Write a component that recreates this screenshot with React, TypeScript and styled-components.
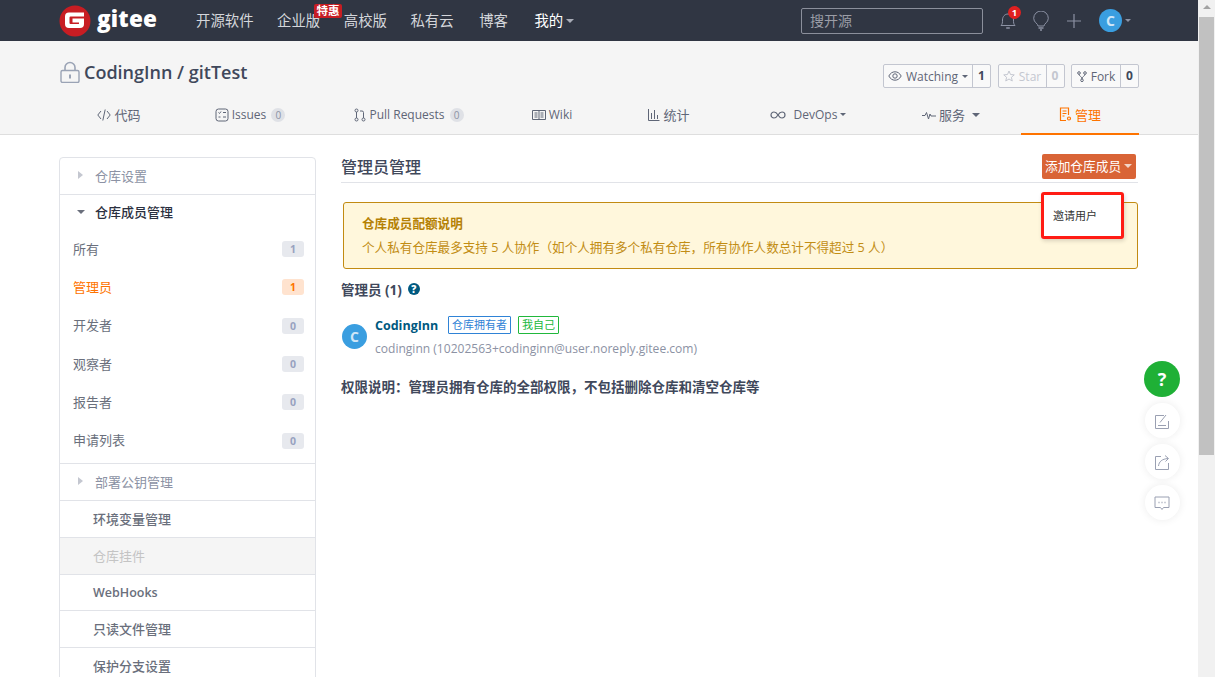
import React from 'react';
import styled, { createGlobalStyle } from 'styled-components';

const GlobalStyle = createGlobalStyle`
  html, body {
    margin: 0;
    height: 677px;
    overflow: hidden;
    background: #fff;
    font-family: "Open Sans", "Noto Sans CJK SC", sans-serif;
    color: #40485b;
  }
  * { box-sizing: border-box; }
`;

const Caret: React.FC<{ size?: number; color?: string; gap?: number }> = ({ size = 4, color = '#8c92a4', gap = 0 }) => (
  <CaretShape $size={size} $color={color} $gap={gap} />
);

const navItems = ['开源软件', '企业版', '高校版', '私有云', '博客'];

const tabs = [
  { label: '代码', width: 118, icon: 'code', cjk: true },
  { label: 'Issues', width: 144, icon: 'issues', count: 0 },
  { label: 'Pull Requests', width: 174, icon: 'pr', count: 0 },
  { label: 'Wiki', width: 112, icon: 'wiki' },
  { label: '统计', width: 122, icon: 'chart', cjk: true },
  { label: 'DevOps', width: 156, icon: 'devops', caret: true },
  { label: '服务', width: 130, icon: 'pulse', caret: true, cjk: true },
];

const members = [
  { label: '所有', count: 1 },
  { label: '管理员', count: 1, active: true },
  { label: '开发者', count: 0 },
  { label: '观察者', count: 0 },
  { label: '报告者', count: 0 },
  { label: '申请列表', count: 0 },
];

const TabIcon: React.FC<{ name: string; color?: string }> = ({ name, color = '#5f6677' }) => {
  const common = { fill: 'none', stroke: color, strokeWidth: 1 };
  switch (name) {
    case 'code':
      return (
        <svg width="14" height="14" viewBox="0 0 14 14" {...common}>
          <path d="M4 3L.8 7 4 11M10 3l3.200 4L10 11M8.200 1.500L5.800 12.500" />
        </svg>
      );
    case 'issues':
      return (
        <svg width="14" height="14" viewBox="0 0 14 14" {...common}>
          <rect x="1" y="1" width="12" height="12" rx="2.500" />
          <path d="M3.500 4.500l1 1 1.500-2M8 4.500h3M3.500 9h2M8 9h3" />
        </svg>
      );
    case 'pr':
      return (
        <svg width="12" height="14" viewBox="0 0 12 14" {...common}>
          <circle cx="2.500" cy="2.500" r="1.500" />
          <circle cx="2.500" cy="11.500" r="1.500" />
          <circle cx="9.500" cy="11.500" r="1.500" />
          <path d="M2.500 4v6M9.500 10V4.500q0-1.500-1.500-1.500H6" />
        </svg>
      );
    case 'wiki':
      return (
        <svg width="14" height="12" viewBox="0 0 14 12" {...common}>
          <path d="M.5 1.500h13v9H.5zM7 1.500v9M2.500 4h3M2.500 6h3M2.500 8h3M8.500 4h3M8.500 6h3M8.500 8h3" />
        </svg>
      );
    case 'chart':
      return (
        <svg width="12" height="13" viewBox="0 0 12 13" {...common}>
          <path d="M.5 1v11.500h11M3.500 5v6M6.500 2v9M9.500 7v4" />
        </svg>
      );
    case 'devops':
      return (
        <svg width="16" height="8" viewBox="0 0 16 8" {...common} strokeWidth="1.200" style={{ marginRight: 5 }}>
          <path d="M8 4C6.500 1.500 5.500 1 4 1a3 3 0 000 6c1.500 0 2.500-.5 4-3 1.500-2.500 2.500-3 4-3a3 3 0 010 6c-1.500 0-2.500-.5-4-3z" />
        </svg>
      );
    case 'pulse':
      return (
        <svg width="14" height="10" viewBox="0 0 14 10" {...common}>
          <path d="M0 5.500h3l1.500-3 2 6.500 1.500-5 1 2h5" />
        </svg>
      );
    default:
      return (
        <svg width="13" height="15" viewBox="0 0 13 15" fill="none" stroke={color} strokeWidth="1.200">
          <path d="M7 13.500H1.500V1h8v7M3.500 4h4M3.500 6.500h4M3.500 9h2" />
          <circle cx="10" cy="11.500" r="1.500" />
        </svg>
      );
  }
};

const App: React.FC = () => (
  <>
    <GlobalStyle />
    <Viewport>
      <Page>
        <Header>
          <Logo>
            <svg width="32" height="32" viewBox="0 0 32 32">
              <circle cx="16" cy="16" r="15.500" fill="#c71d23" />
              <path
                d="M10 7.500h15v4H11.500a1 1 0 00-1 1V18a1 1 0 001 1h8a.5.5 0 00.5-.5v-1h-6.500v-4H25V19a4 4 0 01-4 4H10a4 4 0 01-4-4v-7.500a4 4 0 014-4z"
                fill="#fff"
              />
            </svg>
            <LogoText>gitee</LogoText>
          </Logo>
          <Nav>
            {navItems.map((item) => (
              <NavLink key={item}>
                {item}
                {item === '企业版' && <PromoBadge>特惠</PromoBadge>}
              </NavLink>
            ))}
            <NavLink $bright>
              我的
              <Caret size={4} color="#a9adb8" />
            </NavLink>
          </Nav>
          <HeaderTools>
            <SearchBox>搜开源</SearchBox>
            <Bell>
              <svg width="16" height="19" viewBox="0 0 16 19" fill="none" stroke="#8c92a4" strokeWidth="1">
                <path d="M1 14.500c1.500-1.500 1.500-3 1.500-5.500 0-3.500 2.300-6 5.500-6s5.500 2.500 5.500 6c0 2.500 0 4 1.500 5.500z" />
                <path d="M6.200 17h3.600" strokeWidth="1.500" />
              </svg>
              <BellBadge>1</BellBadge>
            </Bell>
            <svg width="16" height="20" viewBox="0 0 16 20" fill="none" stroke="#8c92a4" strokeWidth="1">
              <path d="M5 15c0-2.500-4.300-3.500-4.300-7.700a7.300 7.300 0 0114.600 0C15.300 11.500 11 12.500 11 15z" />
              <path d="M5.500 17h5M7 19h2" strokeWidth="1.300" />
            </svg>
            <svg width="16" height="16" viewBox="0 0 16 16" stroke="#8c92a4" strokeWidth="1.200">
              <path d="M8 1v14M1 8h14" />
            </svg>
            <UserMenu>
              <Avatar $size={23}>C</Avatar>
              <Caret size={3} color="#8c92a4" />
            </UserMenu>
          </HeaderTools>
        </Header>

        <RepoBar>
          <RepoTop>
            <RepoTitle>
              <svg width="20" height="22" viewBox="0 0 20 22" fill="none">
                <path d="M5 10V6.500a5 5 0 0110 0V10" stroke="#9aa3b5" strokeWidth="1.600" />
                <rect x="1" y="9.500" width="18" height="12" rx="1.500" fill="#f5f5f5" stroke="#9aa3b5" strokeWidth="1.400" />
                <rect x="9" y="13.500" width="2" height="4" fill="#9aa3b5" />
              </svg>
              CodingInn / gitTest
            </RepoTitle>
            <RepoActions>
              <ActionGroup>
                <ActionLabel $w={89}>
                  <svg width="14" height="10" viewBox="0 0 14 10" fill="none" stroke="#5f6677">
                    <path d="M.8 5C2.500 2 4.500.8 7 .8S11.500 2 13.200 5C11.500 8 9.500 9.200 7 9.200S2.500 8 .8 5z" />
                    <circle cx="7" cy="5" r="2.200" />
                  </svg>
                  Watching
                  <Caret size={3} color="#5f6677" />
                </ActionLabel>
                <ActionCount $w={17}>1</ActionCount>
              </ActionGroup>
              <ActionGroup>
                <ActionLabel $w={48} $muted>
                  <svg width="12" height="12" viewBox="0 0 24 24" fill="none" stroke="#c4c7d0" strokeWidth="2">
                    <path d="M12 2l3 7 7.500.7-5.700 5 1.700 7.300L12 18l-6.500 4 1.700-7.300-5.700-5L9 9z" />
                  </svg>
                  Star
                </ActionLabel>
                <ActionCount $w={17} $muted>0</ActionCount>
              </ActionGroup>
              <ActionGroup>
                <ActionLabel $w={49}>
                  <svg width="10" height="11" viewBox="0 0 10 11" fill="none" stroke="#5f6677">
                    <circle cx="2" cy="2" r="1.300" />
                    <circle cx="8" cy="2" r="1.300" />
                    <circle cx="5" cy="9.300" r="1.300" />
                    <path d="M2 3.300c0 2 3 2 3 4.600M8 3.300c0 2-3 2-3 4.600" />
                  </svg>
                  Fork
                </ActionLabel>
                <ActionCount $w={17}>0</ActionCount>
              </ActionGroup>
            </RepoActions>
          </RepoTop>
          <Tabs>
            {tabs.map((tab) => (
              <Tab key={tab.label} $w={tab.width} $cjk={tab.cjk}>
                <TabIcon name={tab.icon} />
                <span>{tab.label}</span>
                {tab.count !== undefined && <TabCount>{tab.count}</TabCount>}
                {tab.caret &&
                  (tab.label === '服务' ? <Caret size={4} color="#5f6677" gap={4} /> : <Caret size={3} color="#5f6677" />)}
              </Tab>
            ))}
            <ActiveTab>
              <TabIcon name="manage" color="#fe7300" />
              管理
            </ActiveTab>
          </Tabs>
        </RepoBar>

        <Body>
          <Sidebar>
            <SideHead>
              <SideArrow />
              仓库设置
            </SideHead>
            <MemberGroup>
              <GroupHead>
                <Caret size={4} color="#6a6f7c" />
                仓库成员管理
              </GroupHead>
              {members.map((m) => (
                <MemberRow key={m.label} $active={m.active}>
                  <MemberLabel>{m.label}</MemberLabel>
                  <CountPill $active={m.active}>{m.count}</CountPill>
                </MemberRow>
              ))}
            </MemberGroup>
            <SideHead>
              <SideArrow />
              部署公钥管理
            </SideHead>
            <SideLink>环境变量管理</SideLink>
            <SideLink $disabled>仓库挂件</SideLink>
            <SideLink $latin>WebHooks</SideLink>
            <SideLink>只读文件管理</SideLink>
            <SideLink>保护分支设置</SideLink>
          </Sidebar>

          <Content>
            <TitleRow>
              <PageTitle>管理员管理</PageTitle>
              <AddWrap>
                <AddButton>
                  添加仓库成员
                  <Caret size={4} color="#f3d5c8" />
                </AddButton>
                <Dropdown>邀请用户</Dropdown>
              </AddWrap>
            </TitleRow>

            <Notice>
              <NoticeTitle>仓库成员配额说明</NoticeTitle>
              <NoticeText>个人私有仓库最多支持 5 人协作（如个人拥有多个私有仓库，所有协作人数总计不得超过 5 人）</NoticeText>
            </Notice>

            <SectionLabel>
              管理员 (1)
              <HelpDot>?</HelpDot>
            </SectionLabel>

            <MemberCard>
              <Avatar $size={25}>C</Avatar>
              <MemberInfo>
                <NameLine>
                  <MemberName>CodingInn</MemberName>
                  <Tag $color="#2f83d6">仓库拥有者</Tag>
                  <Tag $color="#21b83c">我自己</Tag>
                </NameLine>
                <MemberMail>codinginn (10202563+codinginn@user.noreply.gitee.com)</MemberMail>
              </MemberInfo>
            </MemberCard>

            <RightsNote>权限说明：管理员拥有仓库的全部权限，不包括删除仓库和清空仓库等</RightsNote>
          </Content>
        </Body>
      </Page>

      <Scrollbar>
        <ScrollUp />
        <ScrollThumb />
      </Scrollbar>

      <FloatBar>
        <FloatHelp>?</FloatHelp>
        <FloatButton>
          <svg width="16" height="16" viewBox="0 0 16 16" fill="none" stroke="#9aa0b2">
            <path d="M14.500 8v7.500h-13v-13H10M4 12.500h8M6 9.500l6-7.500" />
          </svg>
        </FloatButton>
        <FloatButton>
          <svg width="16" height="16" viewBox="0 0 16 16" fill="none" stroke="#9aa0b2">
            <path d="M14.500 9v6.500h-13v-13H7M4.500 12C5 7.500 8 5 14 4.500M11 1.500l3.500 3-3 3" />
          </svg>
        </FloatButton>
        <FloatButton>
          <svg width="16" height="16" viewBox="0 0 16 16" fill="none" stroke="#9aa0b2">
            <path d="M1 2h14v10.500H9.500L8 14.500l-1.500-2H1z" />
            <path d="M4.500 7.500h1M7.500 7.500h1M10.500 7.500h1" strokeWidth="1.500" />
          </svg>
        </FloatButton>
      </FloatBar>
    </Viewport>
  </>
);

const Viewport = styled.div`
  display: flex;
  width: 1215px;
  height: 677px;
  overflow: hidden;
`;

const Page = styled.div`
  flex: 0 0 1198px;
  height: 677px;
  overflow: hidden;
  font-size: 13px;
`;

const CaretShape = styled.span<{ $size: number; $color: string; $gap: number }>`
  display: inline-block;
  width: 0;
  height: 0;
  margin-left: ${(p) => p.$gap}px;
  border-left: ${(p) => p.$size}px solid transparent;
  border-right: ${(p) => p.$size}px solid transparent;
  border-top: ${(p) => p.$size}px solid ${(p) => p.$color};
`;

const Header = styled.header`
  display: flex;
  align-items: center;
  height: 41px;
  padding: 0 67px 0 59px;
  background: #303643;
`;

const Logo = styled.div`
  display: flex;
  flex: none;
  align-items: center;
  gap: 6px;
  width: 137px;
`;

const LogoText = styled.span`
  font-family: "Open Sans", sans-serif;
  font-weight: 800;
  font-size: 22.500px;
  letter-spacing: 0.2px;
  color: #fff;
  line-height: 32px;
  margin-top: -3px;
`;

const Nav = styled.nav`
  display: flex;
  flex: none;
  align-items: center;
  gap: 23.500px;
  white-space: nowrap;

  a:nth-child(5) {
    margin-left: 2px;
  }
`;

const NavLink = styled.a<{ $bright?: boolean }>`
  position: relative;
  display: flex;
  flex: none;
  align-items: center;
  gap: 3px;
  font-size: 14.400px;
  line-height: 20px;
  color: ${(p) => (p.$bright ? '#fff' : '#d4d6db')};
  margin-left: ${(p) => (p.$bright ? '3px' : '0')};
`;

const PromoBadge = styled.span`
  position: absolute;
  left: 37px;
  top: -7px;
  width: 28px;
  height: 14px;
  background: #c71d23;
  border-radius: 2px;
  color: #fff;
  font-size: 11.500px;
  font-weight: 700;
  line-height: 14px;
  text-align: center;
`;

const HeaderTools = styled.div`
  display: flex;
  flex: none;
  align-items: center;
  margin-left: auto;
  gap: 17px;
`;

const SearchBox = styled.div`
  width: 182px;
  height: 26px;
  padding-left: 8px;
  border: 1px solid #8b8f9b;
  border-radius: 2px;
  color: #9a9da6;
  font-size: 14px;
  line-height: 24px;
`;

const Bell = styled.div`
  position: relative;
  display: flex;
`;

const BellBadge = styled.span`
  position: absolute;
  left: 8px;
  top: -5px;
  width: 13px;
  height: 13px;
  border-radius: 50%;
  background: #e02020;
  color: #fff;
  font-size: 9.500px;
  font-weight: 700;
  line-height: 13px;
  text-align: center;
`;

const UserMenu = styled.div`
  display: flex;
  align-items: center;
  gap: 3px;
`;

const Avatar = styled.span<{ $size: number }>`
  display: flex;
  align-items: center;
  justify-content: center;
  flex: none;
  width: ${(p) => p.$size}px;
  height: ${(p) => p.$size}px;
  border-radius: 50%;
  background: #3a9ee0;
  color: #cfe6f7;
  font-size: 14px;
  font-weight: 700;
`;

const RepoBar = styled.section`
  height: 94px;
  padding: 0 59px 0 60px;
  background: #f5f5f5;
  border-bottom: 1px solid #dedede;
`;

const RepoTop = styled.div`
  display: flex;
  justify-content: space-between;
  height: 57px;
  padding-top: 21px;
`;

const RepoTitle = styled.h1`
  display: flex;
  align-items: center;
  gap: 4px;
  height: 22px;
  margin: -1px 0 0;
  font-size: 18px;
  font-weight: 600;
  color: #40485b;
`;

const RepoActions = styled.div`
  display: flex;
  gap: 6.500px;
  margin-top: 2px;
`;

const ActionGroup = styled.div`
  display: flex;
  height: 24px;
  background: #f9f9f9;
  border: 1px solid #c3c6d0;
  border-radius: 2px;
  font-size: 12px;
`;

const ActionLabel = styled.span<{ $w: number; $muted?: boolean }>`
  display: flex;
  align-items: center;
  justify-content: center;
  gap: 4px;
  width: ${(p) => p.$w}px;
  color: ${(p) => (p.$muted ? '#c4c7d0' : '#5f6677')};
  border-right: 1px solid #c3c6d0;
`;

const ActionCount = styled.span<{ $w: number; $muted?: boolean }>`
  width: ${(p) => p.$w}px;
  text-align: center;
  line-height: 22px;
  font-weight: 700;
  color: ${(p) => (p.$muted ? '#c4c7d0' : '#40485b')};
`;

const Tabs = styled.nav`
  display: flex;
  height: 36px;
`;

const Tab = styled.a<{ $w: number; $cjk?: boolean }>`
  display: flex;
  align-items: center;
  justify-content: center;
  gap: 3px;
  width: ${(p) => p.$w}px;
  height: 35px;
  padding-bottom: 2px;
  color: #5f6677;
  font-size: ${(p) => (p.$cjk ? '13px' : '12px')};
`;

const TabCount = styled.span`
  width: 14px;
  height: 14px;
  margin-left: 2px;
  border-radius: 50%;
  background: #dfe1e6;
  color: #8c92a4;
  font-size: 10px;
  line-height: 14px;
  text-align: center;
`;

const ActiveTab = styled.a`
  display: flex;
  align-items: center;
  justify-content: center;
  gap: 3px;
  width: 118px;
  height: 37px;
  margin-left: auto;
  padding-bottom: 3px;
  border-bottom: 2px solid #fe7300;
  color: #fe7300;
  font-size: 13px;
`;

const Body = styled.main`
  display: grid;
  grid-template-columns: 257px 797px;
  gap: 25px;
  padding: 22px 0 0 59px;
`;

const Sidebar = styled.aside`
  border: 1px solid #e1e3e8;
  border-radius: 4px;
  height: 600px;
`;

const SideHead = styled.div`
  display: flex;
  align-items: center;
  gap: 12px;
  height: 37px;
  padding: 0 0 2px 18px;
  border-bottom: 1px solid #e1e3e8;
  color: #8c92a4;
`;

const SideArrow = styled.span`
  width: 0;
  height: 0;
  border-top: 4px solid transparent;
  border-bottom: 4px solid transparent;
  border-left: 5px solid #c4c7d0;
`;

const MemberGroup = styled.div`
  height: 269px;
  border-bottom: 1px solid #e1e3e8;
`;

const GroupHead = styled.div`
  display: flex;
  align-items: center;
  gap: 10px;
  height: 35px;
  padding: 0 0 2px 17px;
  color: #2b3040;
  font-weight: 500;
`;

const MemberRow = styled.div<{ $active?: boolean }>`
  display: flex;
  align-items: center;
  justify-content: space-between;
  height: 38.300px;
  padding: 0 11px 0 13px;
  color: ${(p) => (p.$active ? '#fe7300' : '#6a6f7c')};
`;

const MemberLabel = styled.span`
  margin-top: -2px;
`;

const CountPill = styled.span<{ $active?: boolean }>`
  width: 22px;
  height: 16px;
  border-radius: 3px;
  background: ${(p) => (p.$active ? '#ffe3cf' : '#e7e9ee')};
  color: ${(p) => (p.$active ? '#fe7300' : '#98a2c0')};
  font-size: 10.500px;
  font-weight: 700;
  line-height: 16px;
  text-align: center;
`;

const SideLink = styled.div<{ $disabled?: boolean; $latin?: boolean }>`
  display: flex;
  align-items: center;
  height: ${(p) => (p.$latin ? '36px' : '37px')};
  padding: 0 0 ${(p) => (p.$latin ? '0' : '1px')} 33px;
  border-bottom: 1px solid #e1e3e8;
  background: ${(p) => (p.$disabled ? '#f5f5f5' : '#fff')};
  color: ${(p) => (p.$disabled ? '#c4c4c4' : '#6a6f7c')};
  font-size: ${(p) => (p.$latin ? '12.500px' : '13px')};
  font-weight: ${(p) => (p.$latin ? 600 : p.$disabled ? 400 : 500)};
`;

const Content = styled.div`
  display: flex;
  flex-direction: column;
`;

const TitleRow = styled.div`
  display: flex;
  align-items: flex-start;
  justify-content: space-between;
  height: 26px;
  border-bottom: 1px solid #e1e3e8;
  padding: 0 2px 0 0;
`;

const PageTitle = styled.h2`
  margin: 0;
  font-size: 16px;
  font-weight: 500;
  line-height: 20px;
  color: #40485b;
`;

const AddWrap = styled.div`
  position: relative;
  margin-top: -3px;
`;

const AddButton = styled.button`
  display: flex;
  align-items: center;
  gap: 3px;
  width: 94px;
  height: 25px;
  padding: 0 0 2px 3px;
  border: 0;
  border-radius: 2px;
  background: #d96436;
  color: #fff;
  font-family: inherit;
  font-size: 12.700px;
`;

const Dropdown = styled.div`
  position: absolute;
  z-index: 2;
  top: 38px;
  left: -1px;
  width: 83px;
  height: 47px;
  padding-left: 9px;
  border: 3px solid #ff1c14;
  border-radius: 3px;
  background: #fff;
  box-shadow: 1px 2px 4px rgba(0, 0, 0, 0.15);
  color: #333;
  font-size: 11px;
  line-height: 41px;
`;

const Notice = styled.div`
  height: 67px;
  margin: 19px 0 0 2px;
  padding: 11px 18px;
  border: 1px solid #c28b12;
  border-radius: 3px;
  background: #fff7dc;
  font-size: 12.600px;
`;

const NoticeTitle = styled.div`
  color: #b58105;
  font-weight: 700;
  line-height: 20px;
`;

const NoticeText = styled.div`
  margin-top: 4px;
  color: #c28d14;
  line-height: 20px;
`;

const SectionLabel = styled.div`
  display: flex;
  align-items: center;
  gap: 6px;
  margin-top: 10px;
  height: 20px;
  color: #40485b;
  font-size: 13.500px;
  font-weight: 700;
`;

const HelpDot = styled.span`
  width: 12px;
  height: 12px;
  border-radius: 50%;
  background: #005980;
  color: #fff;
  font-size: 10px;
  font-weight: 800;
  line-height: 12px;
  text-align: center;
`;

const MemberCard = styled.div`
  display: flex;
  align-items: center;
  gap: 8px;
  height: 42px;
  margin-top: 16px;
  padding-left: 1px;
`;

const MemberInfo = styled.div`
  display: flex;
  flex-direction: column;
  align-self: flex-start;
  gap: 6px;
  padding-top: 1px;
`;

const NameLine = styled.div`
  display: flex;
  align-items: center;
  gap: 7px;
`;

const MemberName = styled.span`
  width: 66px;
  color: #005980;
  font-size: 12.500px;
  font-weight: 700;
`;

const Tag = styled.span<{ $color: string }>`
  height: 18px;
  padding: 0 3px;
  border: 1px solid ${(p) => p.$color};
  border-radius: 1px;
  color: ${(p) => p.$color};
  font-size: 11px;
  line-height: 16px;
`;

const MemberMail = styled.span`
  color: #8c92a4;
  font-size: 12.050px;
  line-height: 18px;
`;

const RightsNote = styled.div`
  margin-top: 20px;
  color: #40485b;
  font-size: 13.500px;
  font-weight: 700;
  line-height: 20px;
`;

const Scrollbar = styled.div`
  flex: 0 0 17px;
  height: 677px;
  background: #f1f1f1;
  padding-top: 5px;
`;

const ScrollUp = styled.div`
  width: 0;
  height: 0;
  margin: 0 auto 8px;
  border-left: 4px solid transparent;
  border-right: 4px solid transparent;
  border-bottom: 4px solid #a3a3a3;
`;

const ScrollThumb = styled.div`
  width: 15px;
  height: 438px;
  margin: 0 auto;
  background: #c1c1c1;
`;

const FloatBar = styled.div`
  position: fixed;
  left: 1144px;
  top: 361px;
  display: flex;
  flex-direction: column;
  align-items: center;
  width: 36px;
  gap: 6px;
`;

const FloatHelp = styled.div`
  width: 36px;
  height: 36px;
  border-radius: 50%;
  background: #1fb036;
  color: #fff;
  font-size: 18px;
  font-weight: 700;
  line-height: 36px;
  text-align: center;
`;

const FloatButton = styled.div`
  display: flex;
  align-items: center;
  justify-content: center;
  width: 35px;
  height: 35px;
  border-radius: 50%;
  background: #fff;
  box-shadow: 0 0 8px rgba(0, 0, 0, 0.08);
`;

export default App;
